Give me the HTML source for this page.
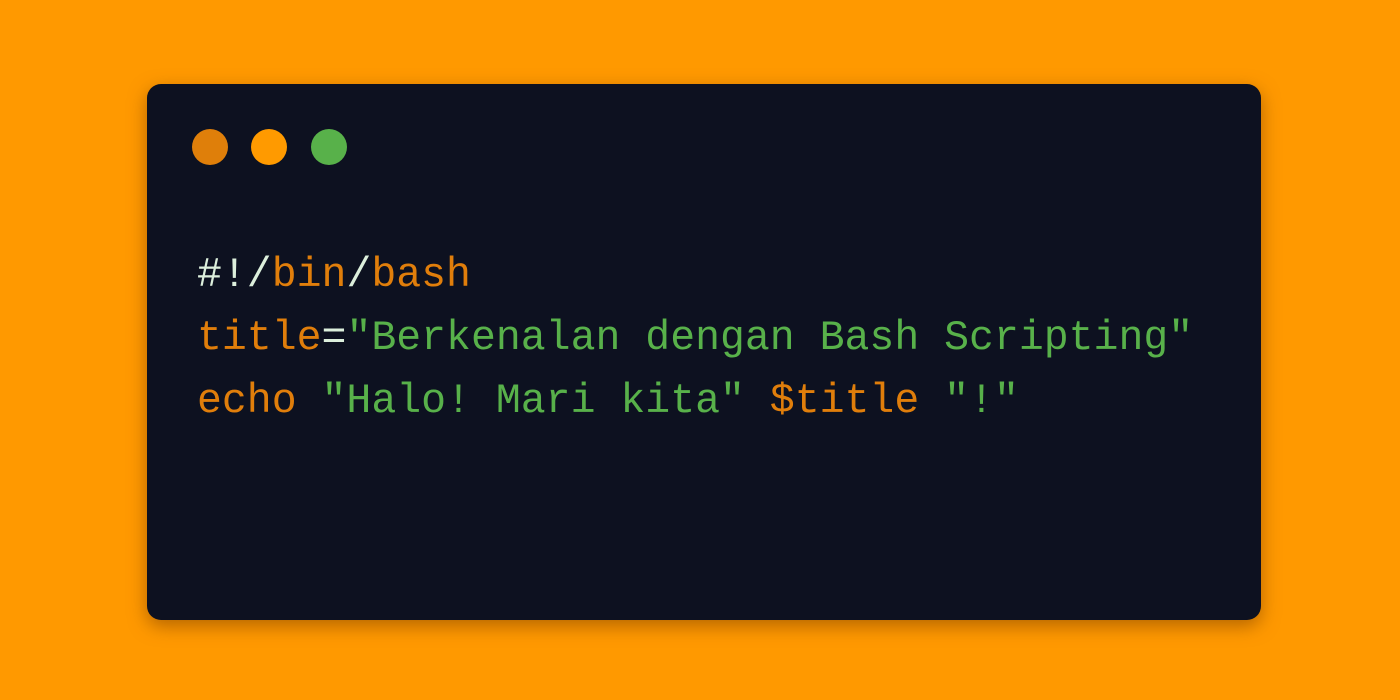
<!DOCTYPE html>
<html><head><meta charset="utf-8"><style>
html,body{margin:0;padding:0;width:1400px;height:700px;overflow:hidden;background:#ff9900;}
.card{position:absolute;left:147px;top:84px;width:1114px;height:536px;background:#0d1120;border-radius:14px;box-shadow:0 6px 18px rgba(120,60,0,0.55);}
.dot{position:absolute;top:45px;width:36px;height:36px;border-radius:50%;}
pre{position:absolute;left:50px;top:160px;margin:0;font-family:"Liberation Mono",monospace;font-size:41.5px;line-height:63px;color:#e07e0b;}
.w{color:#dcefdc}.g{color:#58b14a}
</style></head><body>
<div class="card">
<div class="dot" style="left:45px;background:#df7f0a"></div>
<div class="dot" style="left:104px;background:#ff9a00"></div>
<div class="dot" style="left:164px;background:#58b14a"></div>
<pre><span class="w">#!/</span>bin<span class="w">/</span>bash
title<span class="w">=</span><span class="g">"Berkenalan dengan Bash Scripting"</span>
echo <span class="g">"Halo! Mari kita"</span> $title <span class="g">"!"</span></pre>
</div>
</body></html>
